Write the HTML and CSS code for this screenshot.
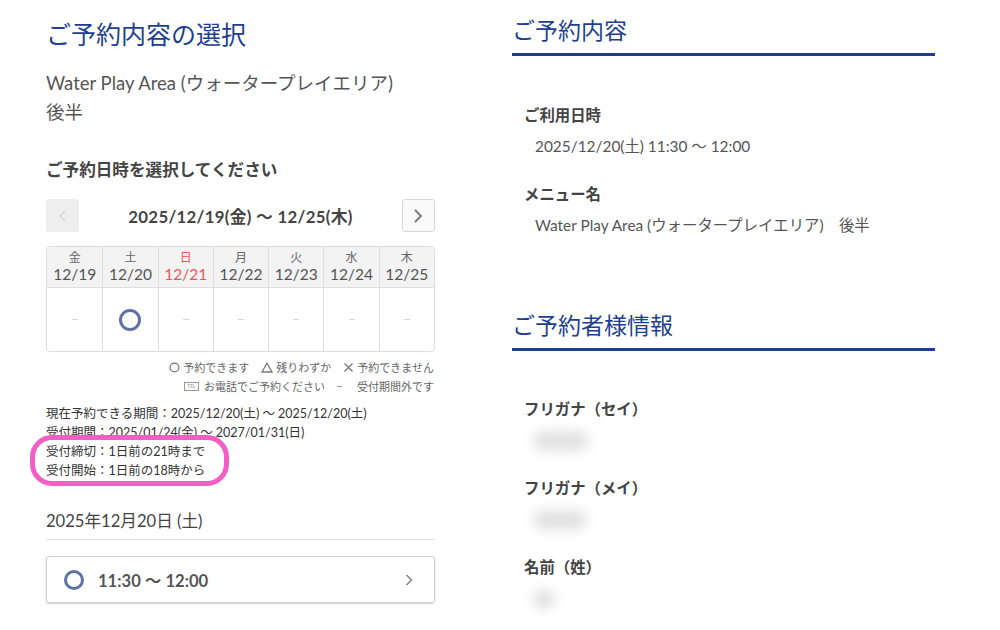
FILE: index.html
```html
<!DOCTYPE html>
<html lang="ja">
<head>
<meta charset="utf-8">
<link rel="stylesheet" href="styles.css">
</head>
<body>
<div class="page">
  <section class="left">
    <h1 class="title">ご予約内容の選択</h1>
    <p class="menu">Water Play Area (ウォータープレイエリア)<br>後半</p>
    <h2 class="sub">ご予約日時を選択してください</h2>
    <div class="nav">
      <div class="navbtn prev"><svg width="12" height="14" viewBox="0 0 12 14"><path d="M8 2 L3 7 L8 12" fill="none" stroke="#d8d8d8" stroke-width="1.6"/></svg></div>
      <div class="range">2025/12/19(金) 〜 12/25(木)</div>
      <div class="navbtn next"><svg width="12" height="16" viewBox="0 0 12 16"><path d="M3 2 L9 8 L3 14" fill="none" stroke="#777" stroke-width="1.8"/></svg></div>
    </div>
    <div class="cal">
      <div class="hd"><span class="wd">金</span><span class="dt">12/19</span></div>
      <div class="hd"><span class="wd">土</span><span class="dt">12/20</span></div>
      <div class="hd sun"><span class="wd">日</span><span class="dt">12/21</span></div>
      <div class="hd"><span class="wd">月</span><span class="dt">12/22</span></div>
      <div class="hd"><span class="wd">火</span><span class="dt">12/23</span></div>
      <div class="hd"><span class="wd">水</span><span class="dt">12/24</span></div>
      <div class="hd"><span class="wd">木</span><span class="dt">12/25</span></div>
      <div class="bd"><span class="dash"></span></div>
      <div class="bd"><span class="ring"></span></div>
      <div class="bd"><span class="dash"></span></div>
      <div class="bd"><span class="dash"></span></div>
      <div class="bd"><span class="dash"></span></div>
      <div class="bd"><span class="dash"></span></div>
      <div class="bd"><span class="dash"></span></div>
    </div>
    <div class="legend">
      <div class="lrow">
        <span class="li"><svg width="11" height="11" viewBox="0 0 11 11"><circle cx="5.5" cy="5.5" r="4.4" fill="none" stroke="#777" stroke-width="1.3"/></svg>予約できます</span>
        <span class="li"><svg width="12" height="11" viewBox="0 0 12 11"><path d="M6 1.2 L11 10 L1 10 Z" fill="none" stroke="#777" stroke-width="1.3"/></svg>残りわずか</span>
        <span class="li"><svg width="11" height="11" viewBox="0 0 11 11"><path d="M1.5 1.5 L9.5 9.5 M9.5 1.5 L1.5 9.5" stroke="#777" stroke-width="1.3"/></svg>予約できません</span>
      </div>
      <div class="lrow">
        <span class="li"><span class="tel">TEL</span>お電話でご予約ください</span>
        <span class="li"><span class="ldash"></span>受付期間外です</span>
      </div>
    </div>
    <div class="info">
      <p>現在予約できる期間：2025/12/20(土) 〜 2025/12/20(土)</p>
      <p>受付期間：2025/01/24(金) 〜 2027/01/31(日)</p>
      <p>受付締切：1日前の21時まで</p>
      <p>受付開始：1日前の18時から</p>
      <div class="mark"></div>
    </div>
    <div class="day">2025年12月20日 (土)</div>
    <div class="slot">
      <span class="ring small"></span>
      <span class="time">11:30 〜 12:00</span>
      <svg class="chev" width="10" height="14" viewBox="0 0 10 14"><path d="M2.5 2 L7.5 7 L2.5 12" fill="none" stroke="#888" stroke-width="1.6"/></svg>
    </div>
  </section>
  <section class="right">
    <h2 class="head">ご予約内容</h2>
    <div class="items first">
      <div class="label">ご利用日時</div>
      <div class="value">2025/12/20(土) 11:30 〜 12:00</div>
      <div class="label">メニュー名</div>
      <div class="value">Water Play Area (ウォータープレイエリア)　後半</div>
    </div>
    <h2 class="head second">ご予約者様情報</h2>
    <div class="items">
      <div class="label">フリガナ（セイ）</div>
      <div class="value"><span class="blur w1"></span></div>
      <div class="label">フリガナ（メイ）</div>
      <div class="value"><span class="blur w2"></span></div>
      <div class="label">名前（姓）</div>
      <div class="value"><span class="blur w3"></span></div>
    </div>
  </section>
</div>
</body>
</html>
```
FILE: styles.css
```css
* { box-sizing: border-box; }
html, body { margin: 0; padding: 0; background: #fff; }
body {
  font-family: Lato, "Noto Sans CJK JP", sans-serif;
  color: #444;
  width: 1000px;
  height: 630px;
  overflow: hidden;
}
p { margin: 0; }
.page {
  display: flex;
  padding-left: 46px;
  gap: 77px;
}
.left { width: 389px; padding-top: 18px; }
.right { width: 423px; padding-top: 14px; }

.title {
  margin: 0;
  font-size: 25px;
  font-weight: 400;
  line-height: 32px;
  color: #1e3f8f;
}
.menu {
  margin-top: 19px;
  font-size: 18.5px;
  line-height: 29px;
  color: #555;
}
.sub {
  margin: 31px 0 0;
  font-size: 16.6px;
  font-weight: 700;
  line-height: 24px;
  color: #444;
}
.nav {
  margin-top: 17px;
  display: flex;
  align-items: center;
  justify-content: space-between;
  height: 33px;
}
.navbtn {
  width: 33px;
  height: 33px;
  border-radius: 3px;
  display: flex;
  align-items: center;
  justify-content: center;
}
.prev { background: #eeeeee; }
.next { border: 1px solid #d8d8d8; background: #fafafa; }
.range {
  font-size: 16.8px;
  font-weight: 700;
  color: #444;
  letter-spacing: 0.3px;
}

.cal {
  margin-top: 14px;
  display: grid;
  grid-template-columns: repeat(7, 1fr);
  border: 1px solid #dedede;
  border-radius: 4px;
  overflow: hidden;
}
.hd, .bd {
  border-left: 1px solid #dedede;
  display: flex;
  flex-direction: column;
  align-items: center;
  justify-content: center;
}
.hd:nth-child(7n+1), .bd:nth-child(7n+1) { border-left: 0; }
.hd {
  height: 41px;
  background: #f3f3f3;
  border-bottom: 1px solid #dedede;
  color: #555;
}
.wd { font-size: 12px; line-height: 14px; color: #666; }
.dt { font-size: 15.5px; line-height: 18px; }
.sun, .sun .wd { color: #e85858; }
.bd { height: 63px; }
.dash { width: 6px; height: 1px; background: #d6d6d6; }
.ring {
  width: 22px;
  height: 22px;
  border: 3px solid #5e72a8;
  border-radius: 50%;
  display: inline-block;
}

.legend {
  margin-top: 8px;
  font-size: 11px;
  color: #666;
  display: flex;
  flex-direction: column;
  align-items: flex-end;
  gap: 4px;
  padding-right: 1px;
}
.lrow { display: flex; gap: 12px; line-height: 15px; }
.li { display: inline-flex; align-items: center; gap: 3px; }
.tel {
  font-size: 5px;
  border: 1px solid #999;
  color: #999;
  padding: 0 1px;
  line-height: 7px;
  width: 15px;
  text-align: center;
  margin-right: 2px;
}
.ldash { width: 5px; height: 1px; background: #999; margin-right: 12px; }

.info {
  position: relative;
  margin-top: 10px;
  font-size: 12.5px;
  line-height: 19px;
  color: #333;
}
.mark {
  position: absolute;
  left: -16px;
  top: 31px;
  width: 199px;
  height: 51px;
  border: 5px solid #f25ec6;
  border-radius: 22px;
}

.day {
  margin-top: 29px;
  font-size: 16.6px;
  line-height: 24px;
  color: #444;
  padding-bottom: 6px;
  border-bottom: 1px solid #e2e2e2;
}
.slot {
  margin-top: 16px;
  height: 47px;
  border: 1px solid #cfcfcf;
  border-radius: 3px;
  box-shadow: 0 1px 2px rgba(0,0,0,0.18);
  display: flex;
  align-items: center;
  padding: 0 20px 0 17px;
}
.ring.small { width: 20px; height: 20px; }
.time {
  margin-left: 14px;
  font-size: 16.6px;
  font-weight: 700;
  color: #555;
  flex: 1;
}

.head {
  margin: 0;
  font-size: 23px;
  font-weight: 400;
  line-height: 32px;
  color: #1e3f8f;
  padding-bottom: 7px;
  border-bottom: 3px solid #1e3f8f;
}
.head.second { margin-top: 73px; }
.items { padding-left: 12px; padding-top: 47px; }
.items.first { padding-top: 48px; }
.label {
  font-size: 15.4px;
  font-weight: 700;
  line-height: 22px;
  color: #444;
}
.value {
  margin-top: 9px;
  margin-bottom: 26px;
  padding-left: 11px;
  font-size: 15.4px;
  line-height: 22px;
  color: #555;
  height: 22px;
}
.items .value:last-child { margin-bottom: 0; }
.blur {
  display: inline-block;
  height: 20px;
  border-radius: 10px;
  background: #e2e2e2;
  filter: blur(6px);
  margin-top: 2px;
  margin-left: -2px;
}
.w1 { width: 56px; }
.w2 { width: 54px; }
.w3 { width: 22px; }
```
